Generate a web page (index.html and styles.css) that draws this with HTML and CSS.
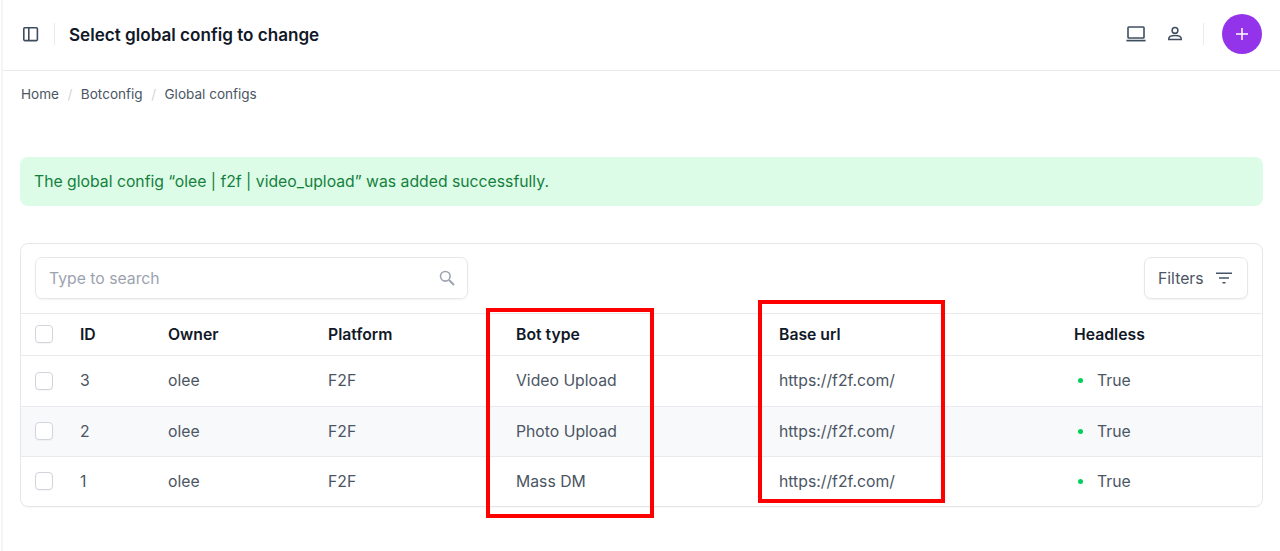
FILE: index.html
```html
<!DOCTYPE html>
<html lang="en">
<head>
<meta charset="utf-8">
<title>Select global config to change</title>
<link rel="stylesheet" href="styles.css">
</head>
<body>
<div class="main">
  <header class="topbar">
    <div class="top-left">
      <button class="icon-btn side-toggle" aria-label="Toggle sidebar">
        <svg width="18" height="18" viewBox="0 0 18 18" fill="none" stroke="#3f4c60" stroke-width="1.6"><rect x="2.8" y="2.8" width="13.6" height="12.8" rx="1"/><path d="M7.8 2.8v12.8"/></svg>
      </button>
      <h1>Select global config to change</h1>
    </div>
    <div class="top-right">
      <svg class="laptop" width="20" height="16" viewBox="0 0 20 16" fill="none" stroke="#3f4c60" stroke-width="1.6"><rect x="2" y="1" width="16" height="11" rx="0.8"/><path d="M0.4 14.6h19.2" stroke-width="1.7"/></svg>
      <svg class="user" width="16" height="16" viewBox="0 0 16 16" fill="none" stroke="#3f4c60" stroke-width="1.5"><circle cx="8" cy="4.4" r="2.9"/><path d="M1.8 13.6v-1c0-2 3-3.2 6.2-3.2s6.2 1.2 6.2 3.2v1z"/></svg>
      <span class="top-sep"></span>
      <button class="add-btn" aria-label="Add">
        <svg width="14" height="14" viewBox="0 0 14 14" stroke="#fff" stroke-width="1.5"><path d="M7 1v12M1 7h12"/></svg>
      </button>
    </div>
  </header>

  <nav class="crumbs">
    <a>Home</a><span class="slash">/</span><a>Botconfig</a><span class="slash">/</span><a>Global configs</a>
  </nav>

  <div class="message">The global config “olee | f2f | video_upload” was added successfully.</div>

  <section class="card">
    <div class="toolbar">
      <label class="search">
        <span class="placeholder">Type to search</span>
        <svg width="18" height="18" viewBox="0 0 18 18" fill="none" stroke="#9ca3af" stroke-width="1.6"><circle cx="7.3" cy="7.3" r="4.8"/><path d="M11 11l5 5" stroke-width="1.9"/></svg>
      </label>
      <button class="filters">Filters
        <svg width="16" height="12" viewBox="0 0 16 12" stroke="#475569" stroke-width="1.4"><path d="M0 1.2h16M3 6h10M6.5 10.8h3"/></svg>
      </button>
    </div>
    <table>
      <thead>
        <tr>
          <th class="c-check"><span class="box"></span></th>
          <th class="c-id">ID</th>
          <th class="c-owner">Owner</th>
          <th class="c-platform">Platform</th>
          <th class="c-bot">Bot type</th>
          <th class="c-url">Base url</th>
          <th class="c-head">Headless</th>
        </tr>
      </thead>
      <tbody>
        <tr>
          <td class="c-check"><span class="box"></span></td>
          <td>3</td><td>olee</td><td>F2F</td><td>Video Upload</td><td>https://f2f.com/</td>
          <td><span class="status"><i class="dot"></i>True</span></td>
        </tr>
        <tr class="alt">
          <td class="c-check"><span class="box"></span></td>
          <td>2</td><td>olee</td><td>F2F</td><td>Photo Upload</td><td>https://f2f.com/</td>
          <td><span class="status"><i class="dot"></i>True</span></td>
        </tr>
        <tr>
          <td class="c-check"><span class="box"></span></td>
          <td>1</td><td>olee</td><td>F2F</td><td>Mass DM</td><td>https://f2f.com/</td>
          <td><span class="status"><i class="dot"></i>True</span></td>
        </tr>
      </tbody>
    </table>
  </section>
</div>
<div class="mark mark-bot"></div>
<div class="mark mark-url"></div>
</body>
</html>
```

FILE: styles.css
```css
* { box-sizing: border-box; }
html, body { margin: 0; height: 100%; }
body {
  font-family: Inter, "Liberation Sans", sans-serif;
  color: #4b5563;
  background: #fff;
  overflow: hidden;
  position: relative;
}
.main {
  margin-left: 1px;
  border-left: 2px solid #f3f4f6;
  height: 551px;
}
.topbar {
  height: 71px;
  border-bottom: 1px solid #e9eaee;
  display: flex;
  align-items: center;
  justify-content: space-between;
  padding: 0 18px 2px 18px;
}
.top-left { display: flex; align-items: center; }
.icon-btn {
  background: none;
  border: 0;
  padding: 0;
  width: 20px;
  height: 22px;
  display: flex;
  align-items: center;
  justify-content: center;
}
.side-toggle {
  width: 34px;
  justify-content: flex-start;
  border-right: 1px solid #e9eaee;
  margin-right: 14px;
}
h1 {
  margin: 1px 0 0;
  font-size: 17.1px;
  line-height: 24px;
  font-weight: 600;
  color: #111827;
}
.top-right { display: flex; align-items: center; }
.laptop { margin-right: 21px; }
.user { margin-right: 20px; }
.top-sep { width: 1px; height: 22px; background: #e9eaee; margin-right: 18px; }
.add-btn {
  width: 40px;
  height: 40px;
  border: 0;
  border-radius: 50%;
  background: #9333ea;
  display: flex;
  align-items: center;
  justify-content: center;
  padding: 0;
}
.crumbs {
  display: flex;
  align-items: center;
  height: 20px;
  margin: 13px 0 0 18px;
  font-size: 13.55px;
  color: #4b5563;
}
.slash { color: #d1d5db; margin: 0 8.5px; }
.message {
  margin: 53px 17px 0 17px;
  height: 49px;
  background: #dcfce7;
  color: #15803d;
  border-radius: 8px;
  font-size: 15.75px;
  line-height: 49px;
  padding-left: 14px;
}
.card {
  margin: 37px 17px 0 17px;
  border: 1px solid #e5e7eb;
  border-radius: 8px;
  box-shadow: 0 1px 1px rgba(0,0,0,.03);
  overflow: hidden;
}
.toolbar {
  height: 70px;
  padding: 13px 14px 0 14px;
  display: flex;
  justify-content: space-between;
  align-items: flex-start;
  border-bottom: 1px solid #e9eaee;
}
.search {
  width: 433px;
  height: 42px;
  border: 1px solid #e5e7eb;
  border-radius: 7px;
  box-shadow: 0 1px 2px rgba(0,0,0,.05);
  display: flex;
  align-items: center;
  justify-content: space-between;
  padding: 0 11px 0 13px;
}
.placeholder { color: #9ca3af; font-size: 15.75px; }
.filters {
  width: 104px;
  height: 42px;
  border: 1px solid #e5e7eb;
  border-radius: 7px;
  background: #fff;
  box-shadow: 0 1px 2px rgba(0,0,0,.05);
  font: inherit;
  font-size: 15.75px;
  color: #4b5563;
  display: flex;
  align-items: center;
  justify-content: space-between;
  padding: 0 15px 0 13px;
}
table {
  width: 100%;
  border-collapse: collapse;
  table-layout: fixed;
  font-size: 15.75px;
}
th, td { text-align: left; padding: 0 14px; }
th {
  height: 41px;
  font-weight: 600;
  color: #111827;
  font-size: 15.75px;
  border-bottom: 1px solid #e9eaee;
}
td { height: 50px; border-bottom: 1px solid #e9eaee; }
tbody tr:first-child td { height: 51px; }
tbody tr:last-child td { border-bottom: 0; }
.alt td { background: #f8f9fb; }
.c-check { width: 45px; padding: 0; }
.c-id { width: 88px; }
.c-owner { width: 160px; }
.c-platform { width: 188px; }
.c-bot { width: 263px; }
.c-url { width: 295px; }
.box {
  display: block;
  width: 18px;
  height: 18px;
  margin-left: 14px;
  background: #fff;
  border: 1px solid #d1d5db;
  border-radius: 4px;
  box-shadow: 0 1px 1px rgba(0,0,0,.04);
}
.status { display: flex; align-items: center; }
.dot {
  width: 5px;
  height: 5px;
  border-radius: 50%;
  background: #00d05a;
  margin: 0 14px 0 4px;
}
.mark {
  position: absolute;
  border: 4px solid #fe0000;
}
.mark-bot { left: 486px; top: 308px; width: 168px; height: 210px; }
.mark-url { left: 758px; top: 300px; width: 187px; height: 203px; }
```
